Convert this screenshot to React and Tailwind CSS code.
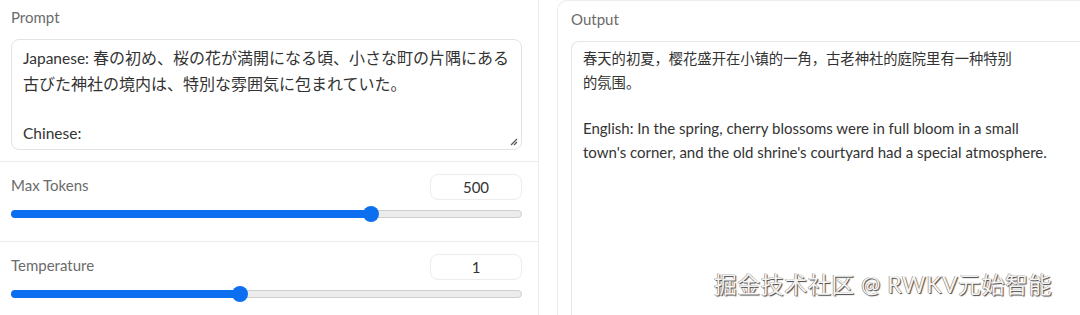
import React from 'react';

const font = { fontFamily: '"Lato", "Noto Sans CJK JP", sans-serif' };

const Slider = ({ label, value, pct }) => (
    <div className="h-[80px] pl-[11px] pr-[16px] pt-[12px] border-b border-[#ececec]">
        <div className="flex items-center justify-between">
            <span className="text-[15px] text-[#6b6b6b] -mt-[3px]">{label}</span>
            <div className="w-[92px] h-[26px] rounded-[8px] border border-[#ececec] flex items-center justify-center text-[15px] text-[#333]">
                {value}
            </div>
        </div>
        <div className="relative mt-[10px] h-[8px] rounded-full bg-[#ececec] border border-[#cfcfcf]">
            <div className="absolute left-[-1px] top-[-1px] h-[8px] rounded-full bg-[#0b6ff0]" style={{ width: `${pct}%` }} />
            <div
                className="absolute top-[-5px] w-[16px] h-[16px] -ml-[8px] rounded-full bg-[#0b6ff0]"
                style={{ left: `${pct}%` }}
            />
        </div>
    </div>
);

export default function App() {
    return (
        <div className="w-[1080px] h-[315px] bg-white flex overflow-hidden" style={font}>
            {/* Left column */}
            <div className="w-[539px] shrink-0 border-r border-[#ececec]">
                <div className="h-[162px] pl-[11px] pr-[16px] pt-[6px] border-b border-[#ececec]">
                    <div className="text-[15px] text-[#6b6b6b]">Prompt</div>
                    <div className="relative mt-[10px] h-[111px] rounded-[8px] border border-[#e3e3e3] px-[11px] pt-[5px] text-[15.5px] leading-[25px] text-[#333]">
                        <div className="whitespace-nowrap">
                            Japanese: <span className="text-[16px]">春の初め、桜の花が満開になる頃、小さな町の片隅にある</span>
                        </div>
                        <div className="text-[16px]">古びた神社の境内は、特別な雰囲気に包まれていた。</div>
                        <div className="h-[25px]" />
                        <div>Chinese:</div>
                        <svg className="absolute right-[3px] bottom-[3px]" width="9" height="9" viewBox="0 0 9 9">
                            <path d="M8 2 L2 8 M8 5 L5 8" stroke="#555" strokeWidth="1.2" />
                        </svg>
                    </div>
                </div>
                <Slider label="Max Tokens" value="500" pct={70.6} />
                <Slider label="Temperature" value="1" pct={44.7} />
            </div>

            {/* Right column */}
            <div className="w-[18px] shrink-0" />
            <div className="flex-1 rounded-tl-[10px] border-l border-t border-[#ececec] pl-[13px] pt-[7px] relative">
                <div className="text-[15px] text-[#6b6b6b]">Output</div>
                <div className="mt-[10px] h-[300px] rounded-tl-[8px] border-l border-t border-[#e6e6e6] pl-[11px] pt-[5px] text-[15px] leading-[24px] text-[#333]">
                    <div className="text-[14.3px]">春天的初夏，樱花盛开在小镇的一角，古老神社的庭院里有一种特别</div>
                    <div className="text-[14.3px]">的氛围。</div>
                    <div className="h-[21px]" />
                    <div>English: In the spring, cherry blossoms were in full bloom in a small</div>
                    <div>town's corner, and the old shrine's courtyard had a special atmosphere.</div>
                </div>
                <div
                    className="absolute right-[28px] bottom-[14px] text-[23px] text-[#f4f4f4] tracking-[0.5px]"
                    style={{ textShadow: '1px 1px 1px #444, -0.5px -0.5px 0 #777' }}
                >
                    掘金技术社区 @ RWKV元始智能
                </div>
            </div>
        </div>
    );
}
